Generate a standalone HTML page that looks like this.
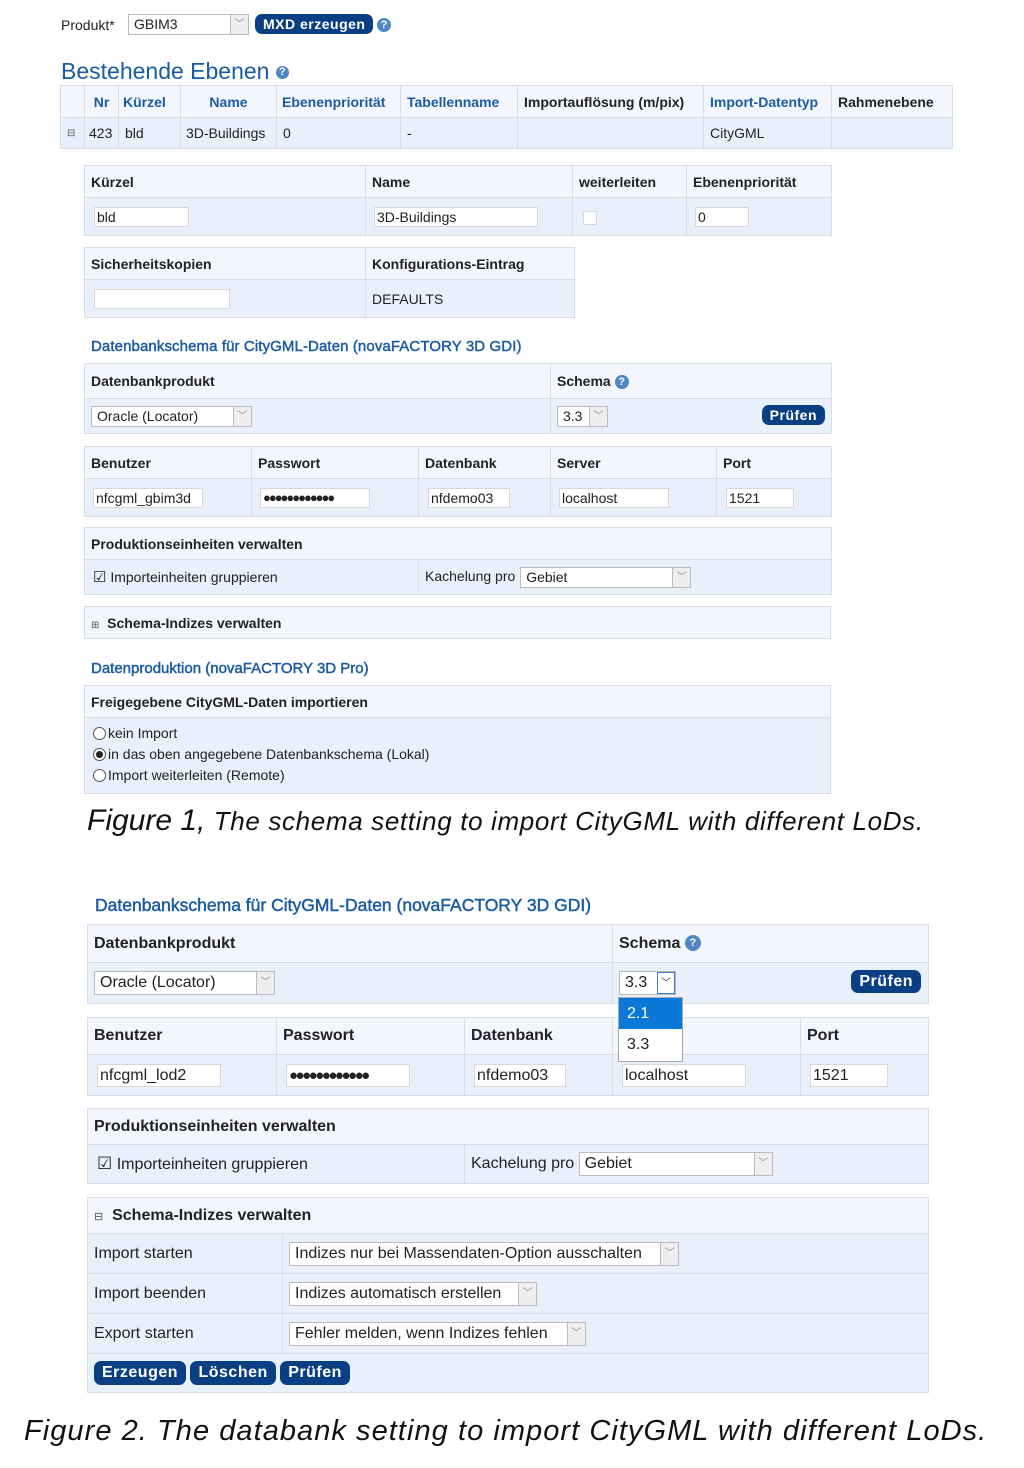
<!DOCTYPE html>
<html><head><meta charset="utf-8"><style>
*{box-sizing:border-box;margin:0;padding:0}
body{width:1024px;height:1468px;background:#fff;position:relative;font-family:"Liberation Sans",Arial,sans-serif;color:#222;overflow:hidden}
.a{position:absolute}
table{position:absolute;border-collapse:collapse;table-layout:fixed;font-size:14px}
td{border:1px solid #d6dde7;padding:0 6px;white-space:nowrap;overflow:visible}
tr.h td{background:#f3f7fd;font-weight:bold}
tr.r td{background:#e8f0fb}
.b td{font-size:16px}
.in{display:inline-block;background:#fff;border:1px solid #d8d8d8;height:20px;line-height:18px;padding:0 2px;vertical-align:middle;font-size:14px}
.b .in{height:23px;line-height:21px;font-size:16px}
.sel{display:inline-block;background:#fff;border:1px solid #bbb;height:21px;line-height:19px;padding-left:5px;position:relative;vertical-align:middle}
.sel i{position:absolute;right:0;top:0;bottom:0;width:18px;border-left:1px solid #bbb;background:#eee;font-style:normal;text-align:center;color:#888;font-size:10px;line-height:19px}
.btn{display:inline-block;background:#0b3f84;color:#fff;font-weight:bold;border-radius:7px;padding:0 8px;letter-spacing:.5px;font-size:14px;height:20px;line-height:20px}
.q{display:inline-block;width:14px;height:14px;border-radius:50%;background:#4f86c6;color:#fff;font-size:11px;font-weight:bold;text-align:center;line-height:14px;vertical-align:middle}
.lnk{color:#1a5ba3}
.st{-webkit-text-stroke:0.45px #1a5ba3}
.th{color:#1a5ba3;font-weight:bold}
.cap{position:absolute;font-family:"Liberation Sans",sans-serif;font-style:italic;color:#111}
.rd{display:inline-block;width:13px;height:13px;border:1px solid #555;border-radius:50%;background:#fff;vertical-align:-2px;margin-right:2px;position:relative}
.rd.on::after{content:"";position:absolute;left:2px;top:2px;width:7px;height:7px;border-radius:50%;background:#222}
</style></head><body>

<div class="a" style="left:61px;top:17px;font-size:14px">Produkt*</div>
<div class="a sel" style="left:128px;top:14px;width:121px;font-size:14px">GBIM3<i>﹀</i></div>
<div class="a btn" style="left:255px;top:14px">MXD erzeugen</div>
<div class="a q" style="left:377px;top:18px">?</div>
<div class="a lnk" style="left:61px;top:58px;font-size:23px">Bestehende Ebenen <span class="q" style="width:13px;height:13px;line-height:13px">?</span></div>

<table style="left:60px;top:85px;width:892px">
<colgroup><col style="width:24px"><col style="width:34px"><col style="width:62px"><col style="width:96px"><col style="width:124px"><col style="width:117px"><col style="width:186px"><col style="width:128px"><col style="width:121px"></colgroup>
<tr class="h" style="height:32px"><td></td><td class="th" style="text-align:center">Nr</td><td class="th" style="padding:0 4px">Kürzel</td><td class="th" style="text-align:center">Name</td><td class="th" style="padding:0 5px">Ebenenpriorität</td><td class="th" style="padding:0 6px">Tabellenname</td><td style="padding:0 6px">Importauflösung (m/pix)</td><td class="th">Import-Datentyp</td><td>Rahmenebene</td></tr>
<tr class="r" style="height:31px"><td style="font-size:10px;color:#555">⊟</td><td style="padding:0 4px">423</td><td>bld</td><td style="padding:0 5px">3D-Buildings</td><td>0</td><td>-</td><td></td><td>CityGML</td><td></td></tr>
</table>

<table style="left:84px;top:165px;width:747px">
<colgroup><col style="width:281px"><col style="width:207px"><col style="width:114px"><col style="width:145px"></colgroup>
<tr class="h" style="height:32px"><td>Kürzel</td><td>Name</td><td>weiterleiten</td><td>Ebenenpriorität</td></tr>
<tr class="r" style="height:38px"><td style="padding-left:9px"><span class="in" style="width:95px">bld</span></td><td style="padding-left:8px"><span class="in" style="width:164px">3D-Buildings</span></td><td style="padding-left:10px"><span class="in" style="width:14px;height:14px"></span></td><td style="padding-left:8px"><span class="in" style="width:54px">0</span></td></tr>
</table>

<table style="left:84px;top:247px;width:490px">
<colgroup><col style="width:281px"><col style="width:209px"></colgroup>
<tr class="h" style="height:32px"><td>Sicherheitskopien</td><td>Konfigurations-Eintrag</td></tr>
<tr class="r" style="height:38px"><td style="padding-left:9px"><span class="in" style="width:136px"></span></td><td>DEFAULTS</td></tr>
</table>

<div class="a lnk st" style="left:91px;top:338px;font-size:15px;letter-spacing:0.1px">Datenbankschema für CityGML-Daten (novaFACTORY 3D GDI)</div>
<table style="left:84px;top:363px;width:747px">
<colgroup><col style="width:466px"><col style="width:281px"></colgroup>
<tr class="h" style="height:35px"><td>Datenbankprodukt</td><td>Schema <span class="q">?</span></td></tr>
<tr class="r" style="height:35px"><td><span class="sel" style="width:161px">Oracle (Locator)<i>﹀</i></span></td><td style="position:relative"><span class="sel" style="width:51px">3.3<i>﹀</i></span><span class="btn" style="position:absolute;right:6px;top:6px">Prüfen</span></td></tr>
</table>

<table style="left:84px;top:446px;width:747px">
<colgroup><col style="width:167px"><col style="width:167px"><col style="width:132px"><col style="width:166px"><col style="width:115px"></colgroup>
<tr class="h" style="height:32px"><td>Benutzer</td><td>Passwort</td><td>Datenbank</td><td>Server</td><td>Port</td></tr>
<tr class="r" style="height:38px"><td style="padding-left:8px"><span class="in" style="width:110px">nfcgml_gbim3d</span></td><td style="padding-left:8px"><span class="in" style="width:110px;font-size:13px;letter-spacing:-2px">●●●●●●●●●●●●</span></td><td style="padding-left:9px"><span class="in" style="width:82px">nfdemo03</span></td><td style="padding-left:8px"><span class="in" style="width:110px">localhost</span></td><td style="padding-left:9px"><span class="in" style="width:68px">1521</span></td></tr>
</table>

<table style="left:84px;top:527px;width:747px">
<colgroup><col style="width:334px"><col style="width:413px"></colgroup>
<tr class="h" style="height:32px"><td colspan="2">Produktionseinheiten verwalten</td></tr>
<tr class="r" style="height:35px"><td style="padding-left:8px"><span style="font-size:15px">☑</span> Importeinheiten gruppieren</td><td>Kachelung pro <span class="sel" style="width:171px;margin-left:1px">Gebiet<i>﹀</i></span></td></tr>
</table>

<table style="left:84px;top:606px;width:747px">
<tr class="h" style="height:32px"><td><span style="font-size:10px;font-weight:normal;color:#555">⊞</span>&nbsp; Schema-Indizes verwalten</td></tr>
</table>

<div class="a lnk st" style="left:91px;top:660px;font-size:15px">Datenproduktion (novaFACTORY 3D Pro)</div>
<table style="left:84px;top:685px;width:747px">
<tr class="h" style="height:32px"><td>Freigegebene CityGML-Daten importieren</td></tr>
<tr class="r" style="height:76px"><td style="padding:5px 8px;line-height:21px;vertical-align:top"><span class="rd"></span>kein Import<br><span class="rd on"></span>in das oben angegebene Datenbankschema (Lokal)<br><span class="rd"></span>Import weiterleiten (Remote)</td></tr>
</table>

<div class="cap" style="left:87px;top:804px;font-size:30px">Figure 1, <span style="font-size:26px;letter-spacing:0.65px">The schema setting to import CityGML with different LoDs.</span></div>

<!-- Figure 2 -->
<div class="a lnk st" style="left:95px;top:895px;font-size:17.5px">Datenbankschema für CityGML-Daten (novaFACTORY 3D GDI)</div>
<table class="b" style="left:87px;top:924px;width:841px">
<colgroup><col style="width:525px"><col style="width:316px"></colgroup>
<tr class="h" style="height:38px"><td>Datenbankprodukt</td><td>Schema <span class="q" style="width:16px;height:16px;line-height:16px">?</span></td></tr>
<tr class="r" style="height:41px"><td><span class="sel" style="width:181px;height:24px;line-height:22px;font-size:16px">Oracle (Locator)<i style="line-height:22px">﹀</i></span></td><td style="position:relative"><span class="sel" style="width:57px;height:24px;line-height:22px;font-size:16px">3.3<i style="line-height:22px;background:#fff;border:1px solid #3a7bd5;color:#333">﹀</i></span><span class="btn" style="position:absolute;right:7px;top:7px;font-size:16px;height:23px;line-height:23px">Prüfen</span></td></tr>
</table>
<table class="b" style="left:87px;top:1017px;width:841px">
<colgroup><col style="width:189px"><col style="width:188px"><col style="width:148px"><col style="width:188px"><col style="width:128px"></colgroup>
<tr class="h" style="height:37px"><td>Benutzer</td><td>Passwort</td><td>Datenbank</td><td></td><td>Port</td></tr>
<tr class="r" style="height:41px"><td style="padding-left:9px"><span class="in" style="width:124px">nfcgml_lod2</span></td><td style="padding-left:9px"><span class="in" style="width:124px;font-size:15px;letter-spacing:-2.5px">●●●●●●●●●●●●</span></td><td style="padding-left:9px"><span class="in" style="width:92px">nfdemo03</span></td><td style="padding-left:9px"><span class="in" style="width:124px">localhost</span></td><td style="padding-left:9px"><span class="in" style="width:78px">1521</span></td></tr>
</table>
<div class="a" style="left:618px;top:997px;width:65px;height:65px;background:#fff;border:1px solid #aaa;font-size:16px">
<div style="background:#0a78d7;color:#fff;height:31px;line-height:31px;padding-left:8px">2.1</div>
<div style="height:32px;line-height:32px;padding-left:8px">3.3</div></div>

<table class="b" style="left:87px;top:1108px;width:841px">
<colgroup><col style="width:377px"><col style="width:464px"></colgroup>
<tr class="h" style="height:36px"><td colspan="2">Produktionseinheiten verwalten</td></tr>
<tr class="r" style="height:39px"><td style="padding-left:9px"><span style="font-size:17px">☑</span> Importeinheiten gruppieren</td><td>Kachelung pro <span class="sel" style="width:194px;height:24px;line-height:22px;font-size:16px">Gebiet<i style="line-height:22px">﹀</i></span></td></tr>
</table>

<table class="b" style="left:87px;top:1197px;width:841px">
<colgroup><col style="width:195px"><col style="width:646px"></colgroup>
<tr class="h" style="height:36px"><td colspan="2"><span style="font-size:11px;font-weight:normal;color:#555">⊟</span>&nbsp; Schema-Indizes verwalten</td></tr>
<tr class="r" style="height:40px"><td>Import starten</td><td><span class="sel" style="width:390px;height:24px;line-height:22px;font-size:16px">Indizes nur bei Massendaten-Option ausschalten<i style="line-height:22px">﹀</i></span></td></tr>
<tr class="r" style="height:40px"><td>Import beenden</td><td><span class="sel" style="width:248px;height:24px;line-height:22px;font-size:16px">Indizes automatisch erstellen<i style="line-height:22px">﹀</i></span></td></tr>
<tr class="r" style="height:40px"><td>Export starten</td><td><span class="sel" style="width:297px;height:24px;line-height:22px;font-size:16px">Fehler melden, wenn Indizes fehlen<i style="line-height:22px">﹀</i></span></td></tr>
<tr class="r" style="height:39px"><td colspan="2" style="padding-left:6px"><span class="btn" style="font-size:16px;height:24px;line-height:24px">Erzeugen</span> <span class="btn" style="font-size:16px;height:24px;line-height:24px">Löschen</span> <span class="btn" style="font-size:16px;height:24px;line-height:24px">Prüfen</span></td></tr>
</table>

<div class="cap" style="left:24px;top:1415px;font-size:29px;letter-spacing:1.05px">Figure 2. The databank setting to import CityGML with different LoDs.</div>
</body></html>
